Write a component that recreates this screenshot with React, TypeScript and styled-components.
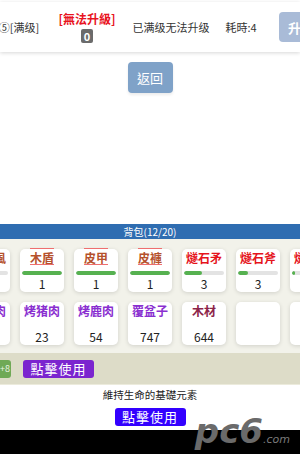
import styled, { createGlobalStyle } from "styled-components";

const GlobalStyle = createGlobalStyle`
  html, body {
    margin: 0;
    padding: 0;
    background: #ffffff;
  }
  body {
    font-family: "Noto Sans CJK TC", "Noto Sans CJK SC", "Noto Sans", sans-serif;
  }
`;

const Page = styled.div`
  width: 300px;
  height: 454px;
  overflow: hidden;
  display: flex;
  flex-direction: column;
  background: #ffffff;
`;

const TopCard = styled.div`
  margin-top: 2px;
  height: 50px;
  display: flex;
  align-items: center;
  background: #ffffff;
  box-shadow: 0 1px 4px rgba(0, 0, 0, 0.16);
  font-size: 11px;
  color: #333;
`;

const Cell = styled.div<{ $w: number }>`
  width: ${(p) => p.$w}px;
  flex-shrink: 0;
  display: flex;
  flex-direction: column;
  align-items: center;
  justify-content: center;
  white-space: nowrap;
`;

const LevelText = styled.span`
  margin-left: -12px;
`;

const Warn = styled.span`
  color: #e8141e;
  font-weight: bold;
  font-size: 12px;
  line-height: 16px;
`;

const ZeroBadge = styled.span`
  margin-top: 2px;
  background: #6b6b6b;
  color: #fff;
  font-weight: bold;
  font-size: 11px;
  line-height: 14px;
  padding: 0 3px;
  border-radius: 2px;
`;

const UpgradeButton = styled.div`
  width: 40px;
  height: 30px;
  margin-left: 15px;
  flex-shrink: 0;
  border-radius: 4px;
  background: #a9bbd7;
  color: #fff;
  font-size: 13px;
  font-weight: bold;
  display: flex;
  align-items: center;
  padding-left: 9px;
  box-sizing: border-box;
`;

const BackRow = styled.div`
  display: flex;
  justify-content: center;
  padding-top: 10px;
`;

const BackButton = styled.div`
  width: 45px;
  height: 31px;
  border-radius: 4px;
  background: #7fa2c8;
  color: #fff;
  font-size: 13px;
  display: flex;
  align-items: center;
  justify-content: center;
  box-shadow: 0 2px 3px rgba(0, 0, 0, 0.08);
`;

const Spacer = styled.div`
  flex: 1;
`;

const BagHeader = styled.div`
  height: 15px;
  background: #2f6db1;
  color: #fff;
  font-size: 10px;
  line-height: 15px;
  text-align: center;
`;

const Grid = styled.div`
  background: #f2f2ea;
  padding: 10px 0 8px;
  display: flex;
  flex-direction: column;
  gap: 10px;
`;

const ItemRow = styled.div`
  display: flex;
  gap: 10px;
  margin-left: -34px;
`;

const Item = styled.div`
  width: 44px;
  height: 43px;
  flex-shrink: 0;
  background: #fff;
  border-radius: 5px;
  box-shadow: 0 1px 4px rgba(0, 0, 0, 0.14);
  display: flex;
  flex-direction: column;
  align-items: center;
  padding-top: 1px;
  box-sizing: border-box;
`;

const ItemName = styled.div<{ $color: string; $deco?: boolean }>`
  height: 15px;
  font-size: 12px;
  line-height: 15px;
  font-weight: bold;
  white-space: nowrap;
  color: ${(p) => p.$color};
  text-decoration: ${(p) => (p.$deco ? "underline overline" : "none")};
  text-decoration-color: #ef6f6f;
`;

const BarTrack = styled.div<{ $show: boolean }>`
  width: 40px;
  height: 4px;
  margin-top: 6px;
  border-radius: 2px;
  background: ${(p) => (p.$show ? "#e3e3e3" : "transparent")};
  overflow: hidden;
`;

const BarFill = styled.div`
  height: 100%;
  border-radius: 2px;
  background: #56b150;
`;

const ItemCount = styled.div`
  margin-top: 1px;
  font-size: 12px;
  line-height: 15px;
  color: #222;
`;

const ActionStrip = styled.div`
  height: 31px;
  background: #dddcc8;
  display: flex;
  align-items: center;
  gap: 12px;
  border-bottom: 1px solid #ecebdc;
`;

const PlusBadge = styled.div`
  width: 14px;
  height: 18px;
  margin-left: -4px;
  background: #6fa956;
  color: #e8f3e0;
  font-size: 9px;
  line-height: 18px;
  text-align: right;
  padding-right: 1px;
  border-radius: 0 3px 3px 0;
`;

const UseButton = styled.div<{ $bg: string }>`
  width: 71px;
  height: 18px;
  border-radius: 3px;
  background: ${(p) => p.$bg};
  color: #fff;
  font-size: 13px;
  line-height: 18px;
  text-align: center;
  letter-spacing: 1px;
`;

const InfoPanel = styled.div`
  height: 43px;
  display: flex;
  flex-direction: column;
  align-items: center;
  padding-top: 2px;
`;

const InfoText = styled.div`
  font-size: 10.5px;
  line-height: 16px;
  color: #222;
  margin-bottom: 5px;
`;

const Footer = styled.div`
  height: 24px;
  background: #000;
  display: flex;
  align-items: flex-start;
  justify-content: flex-end;
  padding-right: 10px;
`;

const Watermark = styled.span`
  font-family: "DejaVu Sans", sans-serif;
  font-style: italic;
  font-weight: bold;
  font-size: 34px;
  line-height: 18px;
  color: #6a6a6a;
  margin-top: -8px;
  small {
    font-size: 11px;
    font-weight: normal;
    color: #7a7a7a;
  }
`;

type Thing = {
  name: string;
  color: string;
  deco?: boolean;
  bar?: number;
  count?: string;
};

const BROWN = "#b5512c";
const RED = "#e5141c";
const PURPLE = "#8a2fd0";

const gear: Thing[] = [
  { name: "皮披風", color: BROWN, bar: 0, count: "1" },
  { name: "木盾", color: BROWN, deco: true, bar: 100, count: "1" },
  { name: "皮甲", color: BROWN, deco: true, bar: 100, count: "1" },
  { name: "皮褲", color: BROWN, deco: true, bar: 100, count: "1" },
  { name: "燧石矛", color: RED, bar: 45, count: "3" },
  { name: "燧石斧", color: RED, bar: 25, count: "3" },
  { name: "燧石刀", color: RED, bar: 8, count: "3" },
];

const food: (Thing | null)[] = [
  { name: "烤兔肉", color: PURPLE, count: "8" },
  { name: "烤猪肉", color: PURPLE, count: "23" },
  { name: "烤鹿肉", color: PURPLE, count: "54" },
  { name: "覆盆子", color: PURPLE, count: "747" },
  { name: "木材", color: "#8c2448", count: "644" },
  null,
  null,
];

const ItemCell = ({ item }: { item: Thing | null }) => (
  <Item>
    {item && (
      <>
        <ItemName $color={item.color} $deco={item.deco}>
          {item.name}
        </ItemName>
        <BarTrack $show={item.bar !== undefined}>
          {item.bar ? <BarFill style={{ width: `${item.bar}%` }} /> : null}
        </BarTrack>
        <ItemCount>{item.count}</ItemCount>
      </>
    )}
  </Item>
);

export default function App() {
  return (
    <Page>
      <GlobalStyle />
      <TopCard>
        <Cell $w={50}>
          <LevelText>⑤[满级]</LevelText>
        </Cell>
        <Cell $w={74}>
          <Warn>[無法升級]</Warn>
          <ZeroBadge>0</ZeroBadge>
        </Cell>
        <Cell $w={94}>已满级无法升级</Cell>
        <Cell $w={46}>耗時:4</Cell>
        <UpgradeButton>升</UpgradeButton>
      </TopCard>

      <BackRow>
        <BackButton>返回</BackButton>
      </BackRow>

      <Spacer />

      <BagHeader>背包(12/20)</BagHeader>
      <Grid>
        <ItemRow>
          {gear.map((g, i) => (
            <ItemCell key={i} item={g} />
          ))}
        </ItemRow>
        <ItemRow>
          {food.map((f, i) => (
            <ItemCell key={i} item={f} />
          ))}
        </ItemRow>
      </Grid>

      <ActionStrip>
        <PlusBadge>+8</PlusBadge>
        <UseButton $bg="#7b25cf">點擊使用</UseButton>
      </ActionStrip>

      <InfoPanel>
        <InfoText>維持生命的基礎元素</InfoText>
        <UseButton $bg="#3300ff">點擊使用</UseButton>
      </InfoPanel>

      <Footer>
        <Watermark>
          pc6<small>.com</small>
        </Watermark>
      </Footer>
    </Page>
  );
}
